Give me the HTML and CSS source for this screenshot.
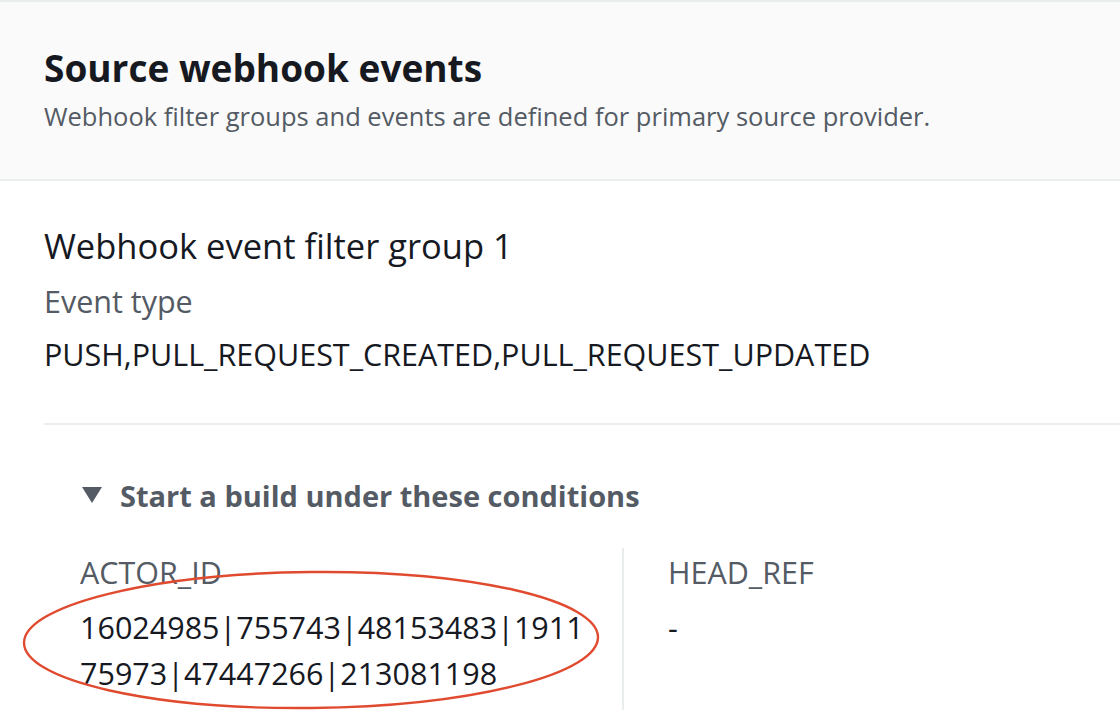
FILE: index.html
```html
<!DOCTYPE html>
<html>
<head>
<meta charset="utf-8">
<link rel="stylesheet" href="styles.css">
</head>
<body>
<div class="panel">
  <header class="panel-header">
    <h2 class="title">Source webhook events</h2>
    <p class="desc">Webhook filter groups and events are defined for primary source provider.</p>
  </header>
  <section class="panel-body">
    <h3 class="group-title">Webhook event filter group 1</h3>
    <div class="label first-label">Event type</div>
    <div class="value">PUSH,PULL_REQUEST_CREATED,PULL_REQUEST_UPDATED</div>
    <hr class="divider">
    <div class="expander">
      <div class="expander-head">
        <span class="caret"></span>
        <span class="expander-title">Start a build under these conditions</span>
      </div>
      <div class="columns">
        <div class="col col-first">
          <div class="label col-label">ACTOR_ID</div>
          <div class="value col-value ids">16024985|755743|48153483|191175973|47447266|213081198</div>
          <svg class="annotation" width="600" height="150" viewBox="0 0 600 150">
            <ellipse cx="300" cy="72" rx="287" ry="68" fill="none" stroke="#e04a2f" stroke-width="2.4" transform="rotate(-0.6 300 72)"/>
          </svg>
        </div>
        <div class="col col-second">
          <div class="label col-label">HEAD_REF</div>
          <div class="value col-value">-</div>
        </div>
      </div>
    </div>
  </section>
</div>
</body>
</html>
```

FILE: styles.css
```css
* { box-sizing: border-box; }
html, body { margin: 0; padding: 0; background: #ffffff; }
body {
  font-family: "Open Sans", "Noto Sans", sans-serif;
  color: #16191f;
  width: 1120px;
  height: 710px;
  overflow: hidden;
}
.panel-header {
  background: #fafafa;
  border-top: 2px solid #eaeded;
  border-bottom: 2px solid #eaeded;
  height: 181px;
  padding: 40px 44px 0 44px;
}
.title {
  margin: 0;
  font-size: 37px;
  line-height: 52px;
  font-weight: 700;
  color: #16191f;
}
.desc {
  margin: 4px 0 0 0;
  font-size: 25.5px;
  line-height: 36px;
  color: #545b64;
}
.panel-body {
  padding: 40px 0 0 44px;
}
.group-title {
  margin: 0;
  font-size: 34.5px;
  line-height: 50px;
  font-weight: 400;
  color: #16191f;
}
.label {
  font-size: 30.5px;
  line-height: 53px;
  color: #545b64;
}
.first-label { margin-top: 4px; }
.value {
  font-size: 30.5px;
  line-height: 53px;
  color: #16191f;
}
.divider {
  border: 0;
  border-top: 2px solid #eaeded;
  margin: 42px 0 0 0;
}
.expander {
  padding-left: 36px;
}
.expander-head {
  display: flex;
  align-items: center;
  gap: 18px;
  height: 60px;
  margin-top: 40px;
}
.caret {
  width: 0;
  height: 0;
  border-left: 10.5px solid transparent;
  border-right: 10.5px solid transparent;
  border-top: 16px solid #545b64;
  margin-left: 2px;
}
.expander-title {
  font-size: 29px;
  font-weight: 700;
  color: #545b64;
}
.columns {
  display: grid;
  grid-template-columns: 542px 1fr;
  margin-top: 23px;
}
.col { position: relative; height: 170px; }
.col-label { line-height: 48px; }
.col-value {
  line-height: 46px;
  margin-top: 8px;
}
.ids {
  word-break: break-all;
  width: 511px;
}
.col-second {
  border-left: 2px solid #eaeded;
  padding-left: 44px;
}
.annotation {
  position: absolute;
  left: -69px;
  top: 20px;
}
```
